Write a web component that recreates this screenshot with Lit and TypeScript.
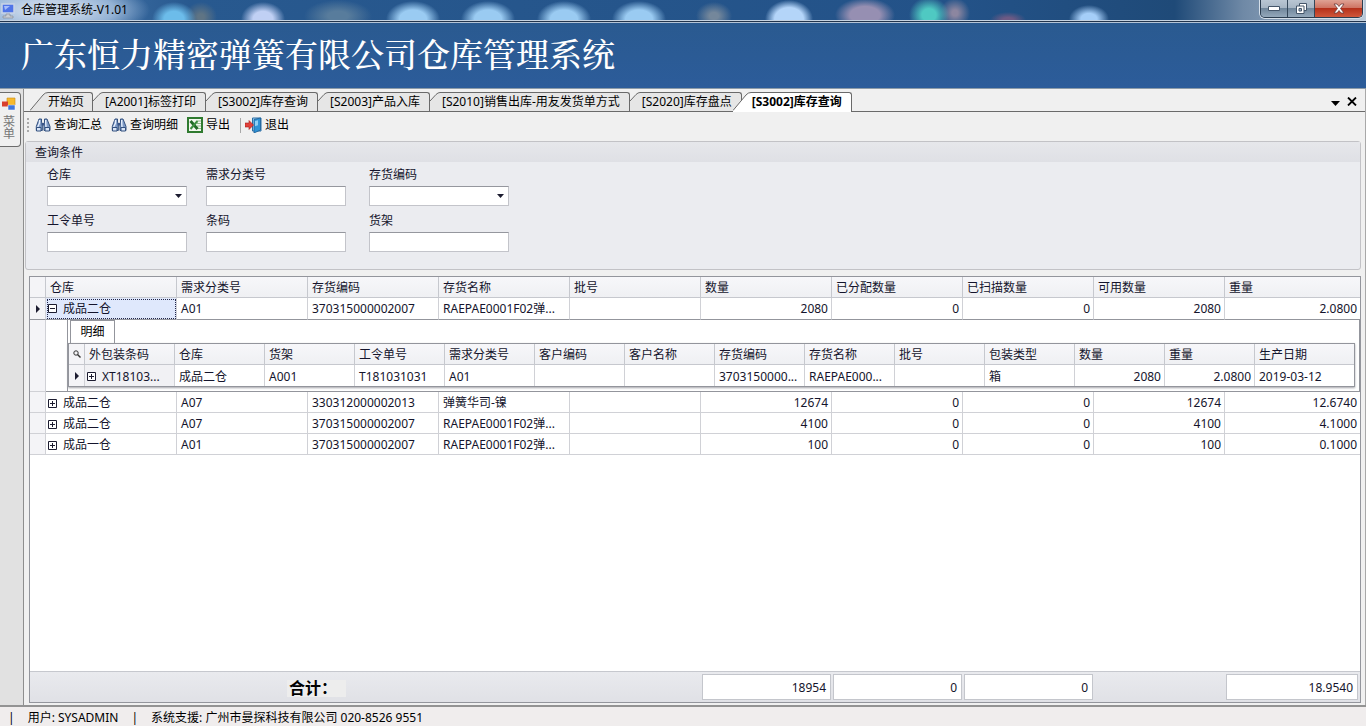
import { LitElement, html, css, svg, nothing } from "lit";
import { customElement, state } from "lit/decorators.js";
import { classMap } from "lit/directives/class-map.js";

interface Stock {
  store: string;
  kind: string;
  code: string;
  name: string;
  qty: string;
  weight: string;
  open?: boolean;
}

const TABS = [
  "开始页",
  "[A2001]标签打印",
  "[S3002]库存查询",
  "[S2003]产品入库",
  "[S2010]销售出库-用友发货单方式",
  "[S2020]库存盘点",
  "[S3002]库存查询",
];

const COLUMNS = ["仓库", "需求分类号", "存货编码", "存货名称", "批号", "数量", "已分配数量", "已扫描数量", "可用数量", "重量"];

const STOCK: Stock[] = [
  { store: "成品二仓", kind: "A01", code: "370315000002007", name: "RAEPAE0001F02弹...", qty: "2080", weight: "2.0800", open: true },
  { store: "成品二仓", kind: "A07", code: "330312000002013", name: "弹簧华司-镍", qty: "12674", weight: "12.6740" },
  { store: "成品二仓", kind: "A07", code: "370315000002007", name: "RAEPAE0001F02弹...", qty: "4100", weight: "4.1000" },
  { store: "成品一仓", kind: "A01", code: "370315000002007", name: "RAEPAE0001F02弹...", qty: "100", weight: "0.1000" },
];

const DETAIL_COLUMNS = [
  "外包装条码", "仓库", "货架", "工令单号", "需求分类号", "客户编码", "客户名称",
  "存货编码", "存货名称", "批号", "包装类型", "数量", "重量", "生产日期",
];

const DETAIL = [
  "XT18103...", "成品二仓", "A001", "T181031031", "A01", "", "",
  "3703150000...", "RAEPAE000...", "", "箱", "2080", "2.0800", "2019-03-12",
];

const binoculars = html`<svg class="ico" width="16" height="16" viewBox="0 0 16 16" aria-hidden="true">
  <path d="M4 2h2.500v3l.8 2v6.500h-6v-4zM9.500 2h2.500l3 7.500v4h-6v-6.500l.5-2z" fill="#7f9bc6" stroke="#33507f" stroke-width="1" />
  <path d="M6.500 6h3v2.500h-3z" fill="#3a5688" />
  <path d="M4.500 3v3l-1.800 4M10.700 3v3l.3 4" stroke="#e6effc" stroke-width="1.400" fill="none" />
  <path d="M1.500 10.500h4.500v3.500h-4.500zM10 10.500h4.500v3.500h-4.500z" fill="#d8e4f6" stroke="#33507f" stroke-width="1" />
</svg>`;

const excel = html`<svg class="ico" width="16" height="16" viewBox="0 0 16 16" aria-hidden="true">
  <path d="M1 1h14v14h-14z" fill="#f4f8f0" stroke="#2f7a2f" stroke-width="2" />
  <path d="M10 4h4M10 6.500h4M10 9h4M10 11.500h4" stroke="#8fb98a" stroke-width="1" />
  <path d="M3.500 4l7 8" stroke="#1f6a25" stroke-width="2.800" />
  <path d="M10.500 4l-7 8" stroke="#3d8f40" stroke-width="2" />
</svg>`;

const exit = html`<svg class="ico" width="17" height="16" viewBox="0 0 17 16" aria-hidden="true">
  <path d="M7.500 1h8.500v13h-8.500z" fill="#a9d6f2" stroke="#2a6ea6" stroke-width="1" />
  <path d="M9 2.500l6.500-1.500v12l-6.500 3z" fill="#2f93d6" stroke="#1c5d94" stroke-width=".8" />
  <path d="M10 4l3-.8v5l-3 1z" fill="#8fd0f5" />
  <path d="M0 6h4v-2.500l4.500 4.500-4.500 4.500v-2.500h-4z" fill="#e2403a" stroke="#a51f1c" stroke-width=".6" />
</svg>`;

const pointer = html`<svg width="4" height="8" viewBox="0 0 4 8" aria-hidden="true"><path d="M0 0l4 4-4 4z" fill="#1c1c30" /></svg>`;

const search = html`<svg width="8" height="8" viewBox="0 0 8 8" aria-hidden="true">
  <circle cx="3" cy="3" r="2.200" fill="none" stroke="#333" /><path d="M4.500 4.500l3 3" stroke="#333" stroke-width="1.400" />
</svg>`;

@customElement("app-root")
export class AppRoot extends LitElement {
  @state() private active = TABS.length - 1;
  @state() private opened = STOCK.map((row) => !!row.open);

  static styles = css`
    :host {
      display: flex;
      flex-direction: column;
      min-height: 100vh;
      background: #f0f0f0;
      color: #14142c;
      font: 12px/16px "Noto Sans", "Noto Sans CJK SC", sans-serif;
    }
    * { box-sizing: border-box; }
    button, input, select { font: inherit; color: inherit; margin: 0; padding: 0; }
    button { border: 0; background: none; white-space: nowrap; }

    .titlebar {
      display: flex;
      justify-content: space-between;
      height: 23px;
      border-bottom: 1px solid #b4c4d6;
      box-shadow: inset 0 -1px #22344c, inset 0 -2px #c4d2e0;
      color: #000;
      background:
        radial-gradient(ellipse 100px 30px at 50px 10px, rgba(200, 215, 234, .95) 30%, rgba(170, 196, 226, .8) 65%, rgba(120, 160, 205, 0)),
        radial-gradient(ellipse 22px 17px at 174px 19px, #6cbcea 45%, rgba(108, 188, 234, 0)),
        radial-gradient(ellipse 16px 15px at 201px 17px, #5f7484 20%, rgba(95, 116, 132, 0)),
        radial-gradient(ellipse 22px 17px at 263px 19px, #c0d0f4 45%, rgba(192, 208, 244, 0)),
        radial-gradient(ellipse 34px 16px at 338px 16px, #587c9c 30%, rgba(88, 124, 156, 0)),
        radial-gradient(ellipse 27px 18px at 413px 19px, #9acbf2 50%, rgba(154, 203, 242, 0)),
        radial-gradient(ellipse 27px 18px at 488px 19px, #9acbf2 50%, rgba(154, 203, 242, 0)),
        radial-gradient(ellipse 27px 18px at 564px 19px, #9acbf2 50%, rgba(154, 203, 242, 0)),
        radial-gradient(ellipse 27px 18px at 639px 19px, #9acbf2 50%, rgba(154, 203, 242, 0)),
        radial-gradient(ellipse 18px 14px at 714px 16px, #74879b 25%, rgba(116, 135, 155, 0)),
        radial-gradient(ellipse 24px 19px at 789px 19px, #b4d5f9 60%, rgba(180, 213, 249, 0)),
        radial-gradient(ellipse 30px 17px at 865px 15px, #968fb2 50%, rgba(150, 143, 178, 0)),
        radial-gradient(ellipse 20px 18px at 929px 15px, #4fc9c2 35%, rgba(79, 201, 194, 0)),
        radial-gradient(ellipse 15px 15px at 955px 13px, #8c86a0 20%, rgba(140, 134, 160, 0)),
        radial-gradient(ellipse 18px 8px at 1008px 20px, #6d5a84 30%, rgba(109, 90, 132, 0)),
        radial-gradient(ellipse 20px 14px at 1089px 19px, #a5cef8 40%, rgba(165, 206, 248, 0)),
        linear-gradient(90deg, #5181b6, #28598f 14%, #235288 70%, #1f4a78 86%, #6f89a6 91%, #b9c8d8);
    }
    .caption { display: flex; gap: 6px; padding: 2px 0 0 1px; }
    .caption svg { margin-top: 1px; }
    .controls {
      display: flex;
      height: 18px;
      margin-right: 3px;
      border: 1px solid #2b3d50;
      border-top: 0;
      border-radius: 0 0 5px 5px;
      overflow: hidden;
      box-shadow: 0 0 0 1px #d5dfe9;
    }
    .controls button {
      display: grid;
      place-items: center;
      width: 27px;
      background: linear-gradient(#b9c6d3, #a7b6c5 45%, #71879c 50%, #94a8ba);
      border-right: 1px solid #34475a;
    }
    .controls .shut {
      width: 47px;
      border: 0;
      background: linear-gradient(#dfa294, #cf7564 45%, #b5311b 50%, #d0573b);
    }

    .banner {
      padding: 8px 21px 14px;
      background: linear-gradient(#2a5a90, #2c5c9a);
      color: #fff;
      border-bottom: 1px solid #8c9ba8;
    }
    h1 { margin: 0; font: 500 33px/43px "Noto Serif CJK SC", "Noto Sans CJK SC", serif; white-space: nowrap; }

    .work { flex: 1; display: flex; }
    .side { width: 23px; background: #e1e1e1; padding-top: 3px; flex: none; }
    .menu {
      display: flex;
      flex-direction: column;
      align-items: center;
      width: 21px;
      height: 55px;
      padding: 4px 2px 0 0;
      gap: 5px;
      background: #f0f0f0;
      border: 1px solid #6c6c6c;
      border-left: 0;
      border-radius: 0 4px 4px 0;
      color: #777;
    }
    .menu span { width: 12px; line-height: 12px; white-space: normal; }
    .main {
      flex: 1;
      min-width: 0;
      display: flex;
      flex-direction: column;
      border-left: 1px solid #8e8e8e;
      border-right: 1px solid #a8a8a8;
    }

    .tabs {
      display: flex;
      height: 23px;
      padding: 3px 8px 0 6px;
      background: linear-gradient(#6a6a6a, #6a6a6a) bottom / 100% 1px no-repeat, #f0f0f0;
      color: #000;
    }
    .tab { display: flex; height: 19px; }
    .tab svg { flex: none; display: block; }
    .tab span {
      height: 19px;
      padding: 0 9px 0 2px;
      border: 1px solid #6a6a6a;
      border-width: 1px 1px 0 0;
      border-radius: 0 3px 0 0;
      background: #e6e6e6;
      line-height: 18px;
    }
    .tab:first-child span { padding: 0 8px 0 0; }
    .tab.on { height: 20px; margin-left: -9px; font-weight: 700; }
    .tab.on span { height: 20px; background: #fff; padding: 0 9px 0 1px; }
    .tools { margin-left: auto; display: flex; gap: 7px; align-items: center; }

    .toolbar { display: flex; align-items: center; height: 26px; padding-left: 3px; color: #000; }
    .toolbar button { display: flex; align-items: center; gap: 3px; margin-right: 9px; }
    .grip { width: 2px; height: 15px; margin-right: 6px; background: repeating-linear-gradient(#a9a9a9 0 2px, transparent 2px 4px); }
    .sep { width: 1px; height: 15px; margin: 0 4px 0 1px; background: #a8a8a8; }

    .filters {
      margin: 3px 4px 0 1px;
      border: 1px solid #c2c2c6;
      border-radius: 3px;
      background: #ebecf0;
      padding-bottom: 17px;
    }
    h2 { margin: 0; padding: 3px 9px 0; height: 20px; font: inherit; background: linear-gradient(#e6e7eb, #dfe0e5); }
    .fields { display: grid; grid-template-columns: 159px 163px 140px; row-gap: 6px; padding: 5px 21px 0; }
    .field { display: flex; flex-direction: column; gap: 3px; }
    .field + .field { min-width: 0; }
    .field label { line-height: 16px; }
    .fields { row-gap: 7px; }
    .box { position: relative; width: 140px; height: 20px; }
    .box input, .box select {
      display: block;
      width: 100%;
      height: 20px;
      padding: 0 4px;
      appearance: none;
      border: 1px solid #c3c4ca;
      border-top-color: #95979e;
      border-radius: 0;
      background: #fff;
    }
    .box svg { position: absolute; right: 5px; top: 8px; pointer-events: none; }

    .grid {
      flex: 1;
      display: flex;
      flex-direction: column;
      margin: 6px 4px 2px 5px;
      border: 1px solid #93959c;
      background: #fff;
    }
    table { width: 100%; table-layout: fixed; border-collapse: separate; border-spacing: 0; }
    th, td {
      height: 21px;
      padding: 2px 3px 0 4px;
      border: 0 solid #d0d1d6;
      border-width: 0 1px 1px 0;
      font-weight: 400;
      line-height: 16px;
      text-align: left;
      white-space: nowrap;
    }
    th { background: linear-gradient(#f7f7fa, #eff0f3); border-color: #c6c8ce; }
    th:last-child, td:last-child { border-right: 0; }
    td.num { text-align: right; }
    td.mark, th.mark { padding: 0; text-align: center; background: #f4f4f7; }
    td.mark svg, th.mark svg { display: block; margin: auto; }
    .mark-col { width: 16px; }
    .col { width: 131px; }
    .detail-col { width: 90px; }
    tr.current > td { height: 22px; padding-top: 0; border-bottom-color: #93959c; }
    tr.current > td.store { background: #dfe8fc; outline: 1px dotted #22264a; outline-offset: -2px; }
    td.store { padding-left: 2px; }
    .node { display: flex; align-items: center; gap: 6px; }
    .node button { display: block; width: 9px; height: 9px; }
    .node svg { display: block; }

    td.host { height: 72px; padding: 0 0 0 21px; border-bottom-color: #93959c; background: #fff; }
    .detail { height: 71px; padding: 0 4px 4px 0; border: 1px solid #93959c; border-width: 0 1px 0 1px; }
    .detail-tab {
      display: block;
      width: 45px;
      height: 23px;
      margin-left: 2px;
      border: 1px solid #93959c;
      border-bottom: 0;
      background: #fff;
      color: #000;
    }
    .inner { border: 1px solid #93959c; box-shadow: 0 1px 2px #a4a5aa; }
    .inner td { border-bottom: 0; }
    .inner td.first { background: #f1f1f4; padding-left: 2px; }

    .totals {
      display: grid;
      grid-template-columns: 16px repeat(9, 131px) 1fr;
      height: 31px;
      margin-top: auto;
      padding: 2px 2px 2px 0;
      border-top: 1px solid #c6c8ce;
      background: linear-gradient(#e9eaee, #e0e1e6);
    }
    .sum-label { grid-column: 1 / 7; padding: 6px 0 0 257px; color: #000; font-size: 16px; font-weight: 700; line-height: 17px; }
    .sum-label span { display: block; width: 59px; padding-left: 2px; background: #ededed; }
    .sum {
      margin: 0 1px 0 1px;
      padding: 5px 4px 0 0;
      border: 1px solid #c4c6cc;
      background: #fff;
      text-align: right;
    }
    .sum.qty { grid-column: 7; }
    .sum.weight { grid-column: 11; margin-right: 0; }

    .status {
      display: flex;
      align-items: center;
      height: 21px;
      padding: 2px 8px 0;
      gap: 13px;
      border-top: 2px solid #939393;
      background: #f0eded;
      color: #000;
    }
  `;

  private slant(index: number) {
    const on = index === this.active;
    if (index === 0 || on) {
      return html`<svg width="18" height=${on ? 20 : 19} viewBox=${`0 0 18 ${on ? 20 : 19}`} aria-hidden="true">
        <path d="M0 20V18.500L13 3Q15 .5 18 .5V20z" fill=${on ? "#fff" : "#e6e6e6"} />
        <path d="M0 18.500L13 3Q15 .5 18 .5" fill="none" stroke="#6a6a6a" />
      </svg>`;
    }
    return html`<svg width="10" height="19" viewBox="0 0 10 19" aria-hidden="true">
      <path d="M0 9L6 2.500Q8 .5 10 .5V19H0z" fill="#e6e6e6" />
      <path d="M0 9L6 2.500Q8 .5 10 .5" fill="none" stroke="#6a6a6a" />
    </svg>`;
  }

  private toggle(index: number) {
    this.opened = this.opened.map((open, i) => (i === index ? !open : open));
  }

  private expander(open: boolean, action?: () => void) {
    return html`<button aria-label=${open ? "收起" : "展开"} @click=${action ?? nothing}>
      <svg width="9" height="9" viewBox="0 0 9 9" aria-hidden="true">
        <path d="M.5 .5h8v8h-8z" fill="#fff" stroke="#1c1c30" />
        <path d="M2 4.500h5" stroke="#1c1c30" />
        ${open ? nothing : svg`<path d="M4.500 2v5" stroke="#1c1c30" />`}
      </svg>
    </button>`;
  }

  private field(id: string, label: string, drop = false) {
    return html`<div class="field">
      <label for=${id}>${label}</label>
      <div class="box">
        ${drop
          ? html`<select id=${id}><option></option></select>
              <svg width="7" height="4" viewBox="0 0 7 4" aria-hidden="true"><path d="M0 0h7l-3.500 4z" fill="#1c1c30" /></svg>`
          : html`<input id=${id} type="text" />`}
      </div>
    </div>`;
  }

  private detail() {
    return html`<tr>
      <td class="mark"></td>
      <td class="host" colspan="10">
        <div class="detail">
          <button class="detail-tab">明细</button>
          <div class="inner">
            <table>
              <colgroup>
                <col class="mark-col" />
                ${DETAIL_COLUMNS.slice(1).map(() => html`<col class="detail-col" />`)}
                <col />
              </colgroup>
              <tr>
                <th class="mark">${search}</th>
                ${DETAIL_COLUMNS.map((name) => html`<th>${name}</th>`)}
              </tr>
              <tr>
                <td class="mark">${pointer}</td>
                ${DETAIL.map((value, i) =>
                  i === 0
                    ? html`<td class="first"><div class="node">${this.expander(false)}<span>${value}</span></div></td>`
                    : html`<td class=${classMap({ num: i === 11 || i === 12 })}>${value}</td>`
                )}
              </tr>
            </table>
          </div>
        </div>
      </td>
    </tr>`;
  }

  private row(item: Stock, index: number) {
    const open = this.opened[index];
    return html`<tr class=${classMap({ current: index === 0 })}>
        <td class="mark">${index === 0 ? pointer : nothing}</td>
        <td class="store"><div class="node">${this.expander(open, () => this.toggle(index))}<span>${item.store}</span></div></td>
        <td>${item.kind}</td>
        <td>${item.code}</td>
        <td>${item.name}</td>
        <td></td>
        <td class="num">${item.qty}</td>
        <td class="num">0</td>
        <td class="num">0</td>
        <td class="num">${item.qty}</td>
        <td class="num">${item.weight}</td>
      </tr>
      ${open ? this.detail() : nothing}`;
  }

  render() {
    return html`
      <header class="titlebar">
        <div class="caption">
          <svg width="14" height="16" viewBox="0 0 14 16" aria-hidden="true">
            <path d="M1 1h12v9h-12z" fill="#4f74e8" stroke="#c9d3e6" stroke-width="1.500" />
            <path d="M3 3h6l-5 4z" fill="#a7bdfb" />
            <path d="M5 11h4v2h3v2h-10v-2h3z" fill="#c9cdd4" stroke="#80858e" stroke-width=".6" />
          </svg>
          <span>仓库管理系统-V1.01</span>
        </div>
        <div class="controls">
          <button aria-label="最小化">
            <svg width="12" height="5" viewBox="0 0 12 5"><path d="M.5 .5h11v4h-11z" fill="#fff" stroke="#45566a" /></svg>
          </button>
          <button aria-label="还原">
            <svg width="13" height="13" viewBox="0 0 13 13">
              <path d="M4.500 1.500h7v7h-7z" fill="#fff" stroke="#45566a" />
              <path d="M1.500 4h7.500v7.500h-7.500z" fill="#fff" stroke="#45566a" />
              <path d="M4 6.500h2.500v2.500h-2.500z" fill="#9fb0c0" stroke="#45566a" />
            </svg>
          </button>
          <button class="shut" aria-label="关闭">
            <svg width="12" height="11" viewBox="0 0 12 11">
              <path d="M1 1h3l2 2.500 2-2.500h3l-3.500 4.500 3.500 4.500h-3l-2-2.500-2 2.500h-3l3.500-4.500z" fill="#fff" stroke="#6b3a3a" stroke-width=".8" />
            </svg>
          </button>
        </div>
      </header>
      <div class="banner"><h1>广东恒力精密弹簧有限公司仓库管理系统</h1></div>

      <div class="work">
        <nav class="side">
          <button class="menu">
            <svg width="14" height="14" viewBox="0 0 14 14" aria-hidden="true">
              <path d="M5 1h8v7h-8z" fill="#f7b92c" stroke="#c98a12" stroke-width=".6" />
              <path d="M0 4.500h6v5h-6z" fill="#d8402f" />
              <path d="M6 8h7v5h-7z" fill="#3f76dd" stroke="#fff" stroke-width=".5" />
            </svg>
            <span>菜单</span>
          </button>
        </nav>

        <main class="main">
          <div class="tabs" role="tablist">
            ${TABS.map(
              (label, i) => html`<button
                class=${classMap({ tab: true, on: i === this.active })}
                role="tab"
                aria-selected=${i === this.active}
                @click=${() => (this.active = i)}
              >${this.slant(i)}<span>${label}</span></button>`
            )}
            <div class="tools">
              <button aria-label="窗口列表"><svg width="9" height="5" viewBox="0 0 9 5"><path d="M0 0h9l-4.500 5z" /></svg></button>
              <button aria-label="关闭页"><svg width="10" height="9" viewBox="0 0 10 9"><path d="M1 .5l8 8M9 .5l-8 8" stroke="#000" stroke-width="1.800" /></svg></button>
            </div>
          </div>

          <div class="toolbar" role="toolbar">
            <i class="grip"></i>
            <button>${binoculars}查询汇总</button>
            <button>${binoculars}查询明细</button>
            <button>${excel}导出</button>
            <i class="sep"></i>
            <button>${exit}退出</button>
          </div>

          <section class="filters">
            <h2>查询条件</h2>
            <div class="fields">
              ${this.field("store", "仓库", true)} ${this.field("kind", "需求分类号")} ${this.field("code", "存货编码", true)}
              ${this.field("order", "工令单号")} ${this.field("barcode", "条码")} ${this.field("shelf", "货架")}
            </div>
          </section>

          <section class="grid">
            <table>
              <colgroup>
                <col class="mark-col" />
                ${COLUMNS.slice(1).map(() => html`<col class="col" />`)}
                <col />
              </colgroup>
              <thead>
                <tr>
                  <th class="mark"></th>
                  ${COLUMNS.map((name) => html`<th>${name}</th>`)}
                </tr>
              </thead>
              <tbody>
                ${STOCK.map((item, i) => this.row(item, i))}
              </tbody>
            </table>
            <div class="totals">
              <div class="sum-label"><span>合计：</span></div>
              <div class="sum qty">18954</div>
              <div class="sum">0</div>
              <div class="sum">0</div>
              <div class="sum weight">18.9540</div>
            </div>
          </section>
        </main>
      </div>

      <footer class="status">
        <span>|</span><span>用户: SYSADMIN</span><span>|</span><span>系统支援: 广州市曼探科技有限公司 020-8526 9551</span>
      </footer>
    `;
  }
}
